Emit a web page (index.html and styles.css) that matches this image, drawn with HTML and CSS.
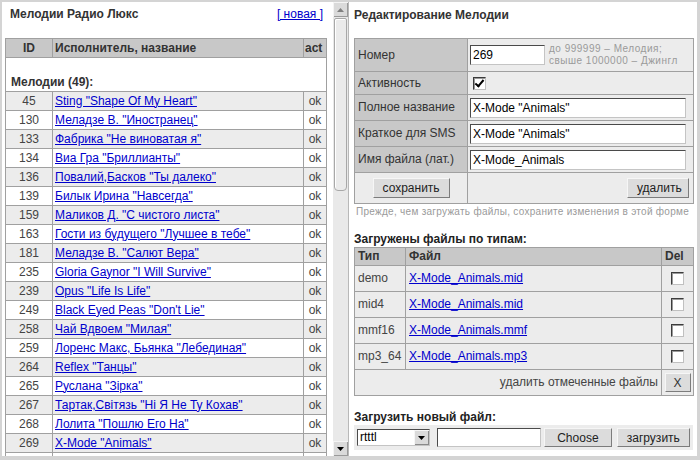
FILE: index.html
```html
<!DOCTYPE html>
<html lang="ru">
<head>
<meta charset="utf-8">
<title>Мелодии Радио Люкс</title>
<link rel="stylesheet" href="styles.css">
</head>
<body>
<div class="frames">
  <div class="pane pane-left">
    <div class="list-view">
      <div class="pane-head">
        <h1 class="title">Мелодии Радио Люкс</h1>
        <a href="#" class="new-link">[ новая ]</a>
      </div>
      <table class="grid list">
        <colgroup><col class="w-id"><col><col class="w-act"></colgroup>
        <thead>
          <tr><th class="c-center">ID</th><th>Исполнитель, название</th><th class="c-act-h">act</th></tr>
        </thead>
        <tbody>
          <tr class="group"><td colspan="3">Мелодии (49):</td></tr>
          <tr class="odd"><td class="c-center">45</td><td><a href="#">Sting "Shape Of My Heart"</a></td><td class="c-center">ok</td></tr>
          <tr><td class="c-center">130</td><td><a href="#">Меладзе В. "Иностранец"</a></td><td class="c-center">ok</td></tr>
          <tr class="odd"><td class="c-center">133</td><td><a href="#">Фабрика "Не виноватая я"</a></td><td class="c-center">ok</td></tr>
          <tr><td class="c-center">134</td><td><a href="#">Виа Гра "Бриллианты"</a></td><td class="c-center">ok</td></tr>
          <tr class="odd"><td class="c-center">136</td><td><a href="#">Повалий,Басков "Ты далеко"</a></td><td class="c-center">ok</td></tr>
          <tr><td class="c-center">139</td><td><a href="#">Билык Ирина "Навсегда"</a></td><td class="c-center">ok</td></tr>
          <tr class="odd"><td class="c-center">159</td><td><a href="#">Маликов Д. "С чистого листа"</a></td><td class="c-center">ok</td></tr>
          <tr><td class="c-center">163</td><td><a href="#">Гости из будущего "Лучшее в тебе"</a></td><td class="c-center">ok</td></tr>
          <tr class="odd"><td class="c-center">181</td><td><a href="#">Меладзе В. "Салют Вера"</a></td><td class="c-center">ok</td></tr>
          <tr><td class="c-center">235</td><td><a href="#">Gloria Gaynor "I Will Survive"</a></td><td class="c-center">ok</td></tr>
          <tr class="odd"><td class="c-center">239</td><td><a href="#">Opus "Life Is Life"</a></td><td class="c-center">ok</td></tr>
          <tr><td class="c-center">249</td><td><a href="#">Black Eyed Peas "Don't Lie"</a></td><td class="c-center">ok</td></tr>
          <tr class="odd"><td class="c-center">258</td><td><a href="#">Чай Вдвоем "Милая"</a></td><td class="c-center">ok</td></tr>
          <tr><td class="c-center">259</td><td><a href="#">Лоренс Макс, Бьянка "Лебединая"</a></td><td class="c-center">ok</td></tr>
          <tr class="odd"><td class="c-center">264</td><td><a href="#">Reflex "Танцы"</a></td><td class="c-center">ok</td></tr>
          <tr><td class="c-center">265</td><td><a href="#">Руслана "Зірка"</a></td><td class="c-center">ok</td></tr>
          <tr class="odd"><td class="c-center">267</td><td><a href="#">Тартак,Світязь "Ні Я Не Ту Кохав"</a></td><td class="c-center">ok</td></tr>
          <tr><td class="c-center">268</td><td><a href="#">Лолита "Пошлю Его На"</a></td><td class="c-center">ok</td></tr>
          <tr class="odd"><td class="c-center">269</td><td><a href="#">X-Mode "Animals"</a></td><td class="c-center">ok</td></tr>
          <tr><td class="c-center">275</td><td><a href="#">А-Студио "Уходи"</a></td><td class="c-center">ok</td></tr>
        </tbody>
      </table>
    </div>
    <div class="scrollbar">
      <div class="sb-btn"><svg width="7" height="4" viewBox="0 0 7 4"><polygon points="0,4 7,4 3.5,0" fill="#808080"/></svg></div>
      <div class="sb-track"><div class="sb-thumb"></div></div>
      <div class="sb-btn"><svg width="7" height="4" viewBox="0 0 7 4"><polygon points="0,0 7,0 3.5,4" fill="#000"/></svg></div>
    </div>
  </div>

  <div class="pane pane-right">
    <div class="pane-head">
      <h1 class="title">Редактирование Мелодии</h1>
    </div>
    <table class="grid form">
      <colgroup><col class="w-label"><col></colgroup>
      <tr class="r-num">
        <td class="label">Номер</td>
        <td class="value">
          <div class="num-line">
            <input class="field field-num" type="text" value="269">
            <span class="hint">до 999999 – Мелодия;<br>свыше 1000000 – Джингл</span>
          </div>
        </td>
      </tr>
      <tr class="r-act">
        <td class="label">Активность</td>
        <td class="value"><input class="chk" type="checkbox" checked></td>
      </tr>
      <tr class="r-field">
        <td class="label">Полное название</td>
        <td class="value"><input class="field field-wide" type="text" value='X-Mode "Animals"'></td>
      </tr>
      <tr class="r-field">
        <td class="label">Краткое для SMS</td>
        <td class="value"><input class="field field-wide" type="text" value='X-Mode "Animals"'></td>
      </tr>
      <tr class="r-field">
        <td class="label">Имя файла (лат.)</td>
        <td class="value"><input class="field field-wide" type="text" value="X-Mode_Animals"></td>
      </tr>
      <tr class="r-btns">
        <td class="value c-center"><button class="btn btn-save" type="button">сохранить</button></td>
        <td class="value c-right"><button class="btn btn-del" type="button">удалить</button></td>
      </tr>
    </table>
    <p class="note">Прежде, чем загружать файлы, сохраните изменения в этой форме</p>

    <h2 class="subtitle">Загружены файлы по типам:</h2>
    <table class="grid files">
      <colgroup><col class="w-type"><col><col class="w-del"></colgroup>
      <tr class="f-head"><th>Тип</th><th>Файл</th><th>Del</th></tr>
      <tr class="f-row"><td>demo</td><td><a href="#">X-Mode_Animals.mid</a></td><td class="c-center"><input class="chk" type="checkbox"></td></tr>
      <tr class="f-row"><td>mid4</td><td><a href="#">X-Mode_Animals.mid</a></td><td class="c-center"><input class="chk" type="checkbox"></td></tr>
      <tr class="f-row"><td>mmf16</td><td><a href="#">X-Mode_Animals.mmf</a></td><td class="c-center"><input class="chk" type="checkbox"></td></tr>
      <tr class="f-row"><td>mp3_64</td><td><a href="#">X-Mode_Animals.mp3</a></td><td class="c-center"><input class="chk" type="checkbox"></td></tr>
      <tr class="f-row"><td colspan="2" class="c-right">удалить отмеченные файлы</td><td class="c-center"><button class="btn btn-x" type="button">X</button></td></tr>
    </table>

    <h2 class="subtitle subtitle-upload">Загрузить новый файл:</h2>
    <div class="upload">
      <div class="select">
        <span class="select-text">rtttl</span>
        <span class="select-arrow"><svg width="7" height="4" viewBox="0 0 7 4"><polygon points="0,0 7,0 3.5,4" fill="#000"/></svg></span>
      </div>
      <input class="field field-file" type="text" value="">
      <button class="btn btn-choose" type="button">Choose</button>
      <button class="btn btn-upload" type="button">загрузить</button>
    </div>
  </div>
</div>
</body>
</html>
```
FILE: styles.css
```css
html, body {
  margin: 0;
  padding: 0;
}

body {
  background: #d4d4d4;
  font-family: "Liberation Sans", Arial, sans-serif;
  font-size: 12px;
  line-height: 15px;
  color: #333;
}

a {
  color: #0000cc;
}

.frames {
  display: flex;
  height: 460px;
  box-sizing: border-box;
  padding: 2px 3px 4px 2px;
}

.pane {
  background: #fff;
}

/* ---------- left pane ---------- */
.pane-left {
  width: 346px;
  flex: none;
  display: flex;
}

.list-view {
  flex: 1;
  overflow: hidden;
  padding: 5px 0 0 3px;
}

.pane-head {
  display: flex;
  justify-content: space-between;
  align-items: baseline;
}

.pane-left .pane-head {
  width: 322px;
  box-sizing: border-box;
  padding: 0 4px 0 5px;
}

.title {
  margin: 0;
  font-size: 12px;
  line-height: 15px;
  font-weight: bold;
  color: #333;
}

.new-link {
  font-size: 12px;
}

.grid {
  border-collapse: collapse;
  table-layout: fixed;
}

.grid th,
.grid td {
  border: 1px solid #a0a0a0;
  vertical-align: middle;
  white-space: nowrap;
  overflow: hidden;
}

.grid th {
  background: #c8c8c8;
  font-weight: bold;
  text-align: left;
  color: #333;
}

.list {
  width: 322px;
  margin-top: 16px;
}

.w-id { width: 47px; }
.w-act { width: 23px; }

.list th,
.list td {
  height: 18px;
  padding: 0 2px;
  color: #444;
}

.list th {
  color: #333;
}

.list th.c-act-h {
  padding: 0 1px;
}

.list tr.odd td {
  background: #ececec;
}

.list tr.group td {
  height: 32px;
  padding: 0 5px 1px;
  vertical-align: bottom;
  font-weight: bold;
  color: #333;
}

.c-center { text-align: center; }
.list th.c-center { text-align: center; }
.c-right { text-align: right; }

/* scrollbar */
.scrollbar {
  width: 15px;
  flex: none;
  display: flex;
  flex-direction: column;
  background: #e6e6e6;
}

.sb-btn {
  height: 15px;
  flex: none;
  display: flex;
  align-items: center;
  justify-content: center;
  background: #dadada;
  box-shadow: inset 1px 1px #f4f4f4, inset -1px -1px #9a9a9a;
}

.sb-track {
  flex: 1;
  padding: 1px 1px 0;
  background: #e9e9e9;
}

.sb-thumb {
  height: 171px;
  border: 1px solid #a8a8a8;
  border-radius: 2px 2px 4px 4px;
  background: #ebebeb;
  box-shadow: inset 1px 1px #fff;
}

/* ---------- right pane ---------- */
.pane-right {
  flex: 1;
  border-left: 1px solid #b8b8b8;
  padding: 6px 3px 0 5px;
}

.form,
.files {
  width: 340px;
}

.form {
  margin-top: 15px;
}

.w-label { width: 113px; }

.form td {
  padding: 0 2px;
  color: #333;
}

.form td.label {
  background: #c8c8c8;
  padding: 0 3px;
}

.form td.value {
  background: #ececec;
}

.r-num td { height: 32px; }
.r-act td { height: 22px; }
.r-field td { height: 25px; }
.r-btns td { height: 30px; }
.form .r-btns td.c-right { padding-right: 4px; }

.num-line {
  display: flex;
  align-items: center;
  gap: 4px;
}

.field {
  box-sizing: border-box;
  height: 20px;
  margin: 0;
  padding: 0 2px;
  border: 1px solid;
  border-color: #4a4a4a #c4c4c4 #c4c4c4 #4a4a4a;
  background: #fff;
  font-family: "Liberation Sans", Arial, sans-serif;
  font-size: 12px;
  color: #000;
  outline: none;
}

.field-num { width: 75px; }
.field-wide { width: 216px; display: block; }

.hint {
  font-size: 10px;
  line-height: 12px;
  letter-spacing: 0.5px;
  color: #9a9a9a;
}

.chk {
  appearance: none;
  -webkit-appearance: none;
  position: relative;
  display: inline-block;
  vertical-align: middle;
  width: 13px;
  height: 13px;
  margin: 0;
  box-sizing: border-box;
  border: 1px solid;
  border-color: #3c3c3c #c0c0c0 #c0c0c0 #3c3c3c;
  background: #fff;
  box-shadow: inset 1px 1px #9a9a9a;
}

.form .chk {
  margin-left: 3px;
}

.chk:checked::after {
  content: "";
  position: absolute;
  left: 3px;
  top: 0;
  width: 3px;
  height: 7px;
  border: solid #000;
  border-width: 0 2.5px 2.5px 0;
  transform: rotate(40deg);
}

.btn {
  box-sizing: border-box;
  height: 20px;
  margin: 0;
  padding: 0 9px;
  border: 1px solid;
  border-color: #f6f6f6 #7c7c7c #7c7c7c #f6f6f6;
  background: #dcdcdc;
  font-family: "Liberation Sans", Arial, sans-serif;
  font-size: 12px;
  color: #222;
  vertical-align: middle;
}

.btn-save { width: 77px; }
.btn-del { width: 62px; }

.note {
  margin: 2px 0 0 2px;
  font-size: 10px;
  line-height: 12px;
  letter-spacing: 0.28px;
  white-space: nowrap;
  color: #9a9a9a;
}

.subtitle {
  margin: 14px 0 0;
  font-size: 12px;
  line-height: 15px;
  font-weight: bold;
  color: #222;
}

.w-type { width: 51px; }
.w-del { width: 32px; }

.files th {
  height: 17px;
  padding: 0 3px;
}

.files td {
  height: 25px;
  padding: 0 3px;
  background: #ececec;
  color: #444;
}

.files td.c-center {
  padding: 0;
}

.btn-x {
  width: 26px;
  height: 19px;
  padding: 0;
  color: #333;
}

.subtitle-upload {
  margin-top: 14px;
}

.upload {
  display: flex;
  align-items: center;
  width: 339px;
  height: 25px;
  box-sizing: border-box;
  padding: 0 3px;
  background: #ececec;
}

.select {
  display: flex;
  align-items: stretch;
  width: 74px;
  height: 17px;
  box-sizing: border-box;
  border: 1px solid;
  border-color: #4a4a4a #c4c4c4 #c4c4c4 #4a4a4a;
  background: #fff;
}

.select-text {
  flex: 1;
  padding-left: 2px;
  line-height: 15px;
  color: #000;
}

.select-arrow {
  width: 15px;
  display: flex;
  align-items: center;
  justify-content: center;
  background: #dadada;
  box-shadow: inset 1px 1px #f6f6f6, inset -1px -1px #8a8a8a;
}

.field-file {
  width: 104px;
  height: 19px;
  margin-left: 7px;
}

.btn-choose {
  width: 68px;
  height: 19px;
  margin-left: 3px;
}

.btn-upload {
  width: 74px;
  height: 19px;
  margin-left: 5px;
}
```
